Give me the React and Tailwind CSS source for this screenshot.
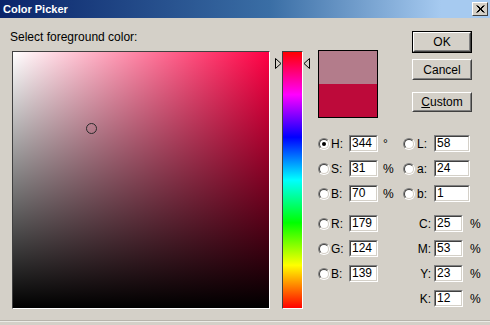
import React from "react";

const FONT = "font-['Liberation_Sans',Arial,sans-serif]";

function Input({ value, w }) {
  return (
    <div className={`${w} h-[17px] border border-t-[#808080] border-l-[#808080] border-b-white border-r-white`}>
      <div className="w-full h-full border border-t-[#404040] border-l-[#404040] border-b-[#d4d0c8] border-r-[#d4d0c8] bg-white pl-[1px] leading-[13px] text-[12px]">
        {value}
      </div>
    </div>
  );
}

function Radio({ checked }) {
  return (
    <div className="w-[12px] h-[12px] rounded-full border border-t-[#808080] border-l-[#808080] border-b-white border-r-white">
      <div className="w-full h-full rounded-full border border-t-[#404040] border-l-[#404040] border-b-[#d4d0c8] border-r-[#d4d0c8] bg-white flex items-center justify-center">
        {checked && <div className="w-[4px] h-[4px] rounded-full bg-black" />}
      </div>
    </div>
  );
}

function Button({ children, def, h }) {
  const inner = (
    <div className="w-full h-full border border-t-white border-l-white border-b-[#404040] border-r-[#404040]">
      <div className="w-full h-full border border-t-[#d4d0c8] border-l-[#d4d0c8] border-b-[#808080] border-r-[#808080] flex items-center justify-center text-[12px]">
        {children}
      </div>
    </div>
  );
  return def ? (
    <div className={`w-[60px] ${h} border border-black`}>{inner}</div>
  ) : (
    <div className={`w-[60px] ${h}`}>{inner}</div>
  );
}

function HsbRow({ label, value, unit, checked, label2, value2, className = "" }) {
  return (
    <div className={`flex items-center h-[17px] ${className}`}>
      <Radio checked={checked} />
      <div className="w-[19px] pl-[1px] leading-[14px]">{label}</div>
      <Input value={value} w="w-[29px]" />
      <div className="w-[25px] pl-[5px] leading-[14px]">{unit}</div>
      <Radio />
      <div className="w-[19px] pl-[2px] leading-[14px]">{label2}</div>
      <Input value={value2} w="w-[36px]" />
    </div>
  );
}

function RgbCmykRow({ label, value, cl, cv, className = "" }) {
  return (
    <div className={`flex items-center h-[17px] ${className}`}>
      {label ? (
        <>
          <Radio />
          <div className="w-[19px] pl-[1px] leading-[14px]">{label}</div>
          <Input value={value} w="w-[29px]" />
        </>
      ) : (
        <div className="w-[60px]" />
      )}
      <div className="w-[56px] text-right pr-[3px] leading-[14px]">{cl}</div>
      <Input value={cv} w="w-[29px]" />
      <div className="pl-[7px] leading-[14px]">%</div>
    </div>
  );
}

export default function App() {
  return (
    <div className={`w-[490px] h-[325px] bg-[#d4d0c8] overflow-hidden text-black text-[12px] flex flex-col ${FONT}`}>
      {/* Title bar */}
      <div className="h-[18px] shrink-0 bg-[linear-gradient(to_right,#0a246a,#3a6ea5_55%,#a6caf0_90%)] flex items-center justify-between pl-[3px] pr-[2px]">
        <div className="text-white font-bold text-[11px] leading-[14px]">Color Picker</div>
        <div className="w-[16px] h-[14px] border border-t-white border-l-white border-b-[#404040] border-r-[#404040] bg-[#d4d0c8] flex items-center justify-center">
          <svg width="9" height="8" viewBox="0 0 9 8">
            <path d="M0.5 0.5 L7.5 7.5 M1.5 0.5 L8.5 7.5 M7.5 0.5 L0.5 7.5 M8.5 0.5 L1.5 7.5" stroke="black" strokeWidth="1" />
          </svg>
        </div>
      </div>

      <div className="flex">
        {/* Column A */}
        <div className="ml-[10px] mt-[12px] flex flex-col">
          <div className="h-[14px] leading-[14px]">Select foreground color:</div>
          <div className="mt-[7px] ml-[2px] flex">
            {/* Saturation/Brightness square */}
            <div className="w-[258px] h-[258px] border border-t-[#404040] border-l-[#404040] border-b-white border-r-white">
              <div className="relative w-[256px] h-[256px] bg-[linear-gradient(to_right,#ffffff,#ff0044)]">
                <div className="absolute inset-0 bg-[linear-gradient(to_bottom,rgba(0,0,0,0),#000000)]" />
                <div className="absolute left-[73px] top-[71px] w-[11px] h-[11px] rounded-full border border-[#2a2a2a]" />
              </div>
            </div>
            {/* Hue slider */}
            <div className="ml-[5px] flex">
              <div className="w-[7px] pt-[7px]">
                <svg width="7" height="11" viewBox="0 0 7 11">
                  <polygon points="0.5,0.5 6,5.5 0.5,10.5" fill="#d4d0c8" stroke="#000" strokeWidth="1" />
                </svg>
              </div>
              <div className="w-[21px] h-[258px] border border-t-[#404040] border-l-[#404040] border-b-white border-r-white">
                <div className="w-full h-full bg-[linear-gradient(to_bottom,#ff0000,#ff00ff_16.7%,#0000ff_33.3%,#00ffff_50%,#00ff00_66.7%,#ffff00_83.3%,#ff0000)]" />
              </div>
              <div className="w-[7px] pt-[7px]">
                <svg width="7" height="11" viewBox="0 0 7 11">
                  <polygon points="6.5,0.5 1,5.5 6.5,10.5" fill="#d4d0c8" stroke="#000" strokeWidth="1" />
                </svg>
              </div>
            </div>
          </div>
        </div>

        {/* Column B */}
        <div className="ml-[8px] mt-[13px] flex flex-col">
          <div className="flex items-start">
            <div className="mt-[19px] w-[60px] h-[68px] border border-black flex flex-col">
              <div className="flex-1 bg-[#b37c8b]" />
              <div className="flex-1 bg-[#bd0a3a]" />
            </div>
            <div className="ml-[34px] flex flex-col">
              <Button def h="h-[22px]">OK</Button>
              <div className="mt-[6px]">
                <Button h="h-[21px]">Cancel</Button>
              </div>
              <div className="mt-[12px]">
                <Button h="h-[20px]">
                  <span><span className="underline">C</span>ustom</span>
                </Button>
              </div>
            </div>
          </div>

          <div className="mt-[17px] flex flex-col">
            <HsbRow label="H:" value="344" unit="°" checked label2="L:" value2="58" />
            <HsbRow className="mt-[8px]" label="S:" value="31" unit="%" label2="a:" value2="24" />
            <HsbRow className="mt-[8px]" label="B:" value="70" unit="%" label2="b:" value2="1" />
            <RgbCmykRow className="mt-[13px]" label="R:" value="179" cl="C:" cv="25" />
            <RgbCmykRow className="mt-[8px]" label="G:" value="124" cl="M:" cv="53" />
            <RgbCmykRow className="mt-[8px]" label="B:" value="139" cl="Y:" cv="23" />
            <RgbCmykRow className="mt-[8px]" cl="K:" cv="12" />
          </div>
        </div>
      </div>

      {/* Bottom window edge */}
      <div className="mt-auto mb-[3px] h-[2px] border-t border-t-[#b8b4ac] border-b border-b-[#ecebe6]" />
    </div>
  );
}
